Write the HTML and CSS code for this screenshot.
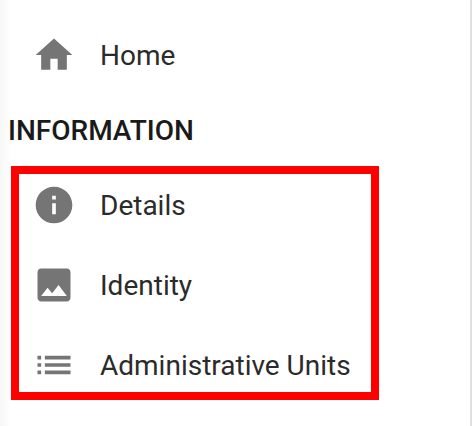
FILE: index.html
```html
<!DOCTYPE html>
<html lang="en">
<head>
  <meta charset="UTF-8">
  <title>Navigation</title>
  <link rel="stylesheet" href="styles.css">
</head>
<body>
  <nav class="drawer">
    <a class="nav-item" href="#">
      <svg class="nav-icon" viewBox="0 0 24 24"><path d="M10 20v-6h4v6h5v-8h3L12 3 2 12h3v8z"/></svg>
      <span>Home</span>
    </a>
    <h2 class="nav-heading">INFORMATION</h2>
    <a class="nav-item" href="#">
      <svg class="nav-icon" viewBox="0 0 24 24"><path d="M12 2C6.48 2 2 6.48 2 12s4.48 10 10 10 10-4.48 10-10S17.52 2 12 2zm1 15h-2v-6h2v6zm0-8h-2V7h2v2z"/></svg>
      <span>Details</span>
    </a>
    <a class="nav-item" href="#">
      <svg class="nav-icon" viewBox="0 0 24 24"><path d="M21 19V5c0-1.1-.9-2-2-2H5c-1.1 0-2 .9-2 2v14c0 1.1.9 2 2 2h14c1.1 0 2-.9 2-2zM8.5 13.5l2.5 3.01L14.5 12l4.5 6H5l3.5-4.5z"/></svg>
      <span>Identity</span>
    </a>
    <a class="nav-item" href="#">
      <svg class="nav-icon" viewBox="0 0 24 24"><path d="M3 13h2v-2H3v2zm0 4h2v-2H3v2zm0-8h2V7H3v2zm4 4h14v-2H7v2zm0 4h14v-2H7v2zM7 7v2h14V7H7z"/></svg>
      <span>Administrative Units</span>
    </a>
    <div class="highlight"></div>
  </nav>
</body>
</html>
```

FILE: styles.css
```css
body {
  margin: 0;
  background-color: #fff;
  font-family: Roboto, sans-serif;
}

.drawer {
  position: relative;
  box-sizing: border-box;
  width: 472px;
  height: 426px;
  padding-top: 15px;
  border-right: 2px solid #e0e0e0;
  background: linear-gradient(to right, #f7f7f7, #fff 11px);
}

.nav-item {
  display: flex;
  align-items: center;
  gap: 24px;
  height: 80px;
  padding-left: 32px;
  color: #2b2b2b;
  font-size: 28px;
  text-decoration: none;
}

.nav-icon {
  flex: none;
  width: 44px;
  height: 44px;
  fill: #757575;
}

.nav-heading {
  display: flex;
  align-items: center;
  height: 70px;
  margin: 0;
  padding-left: 8px;
  color: #1a1a1a;
  font-size: 28px;
  font-weight: 500;
}

/* red annotation drawn over the list */
.highlight {
  position: absolute;
  left: 11px;
  top: 166px;
  box-sizing: border-box;
  width: 368px;
  height: 234px;
  border: 8px solid #f00;
}
```
